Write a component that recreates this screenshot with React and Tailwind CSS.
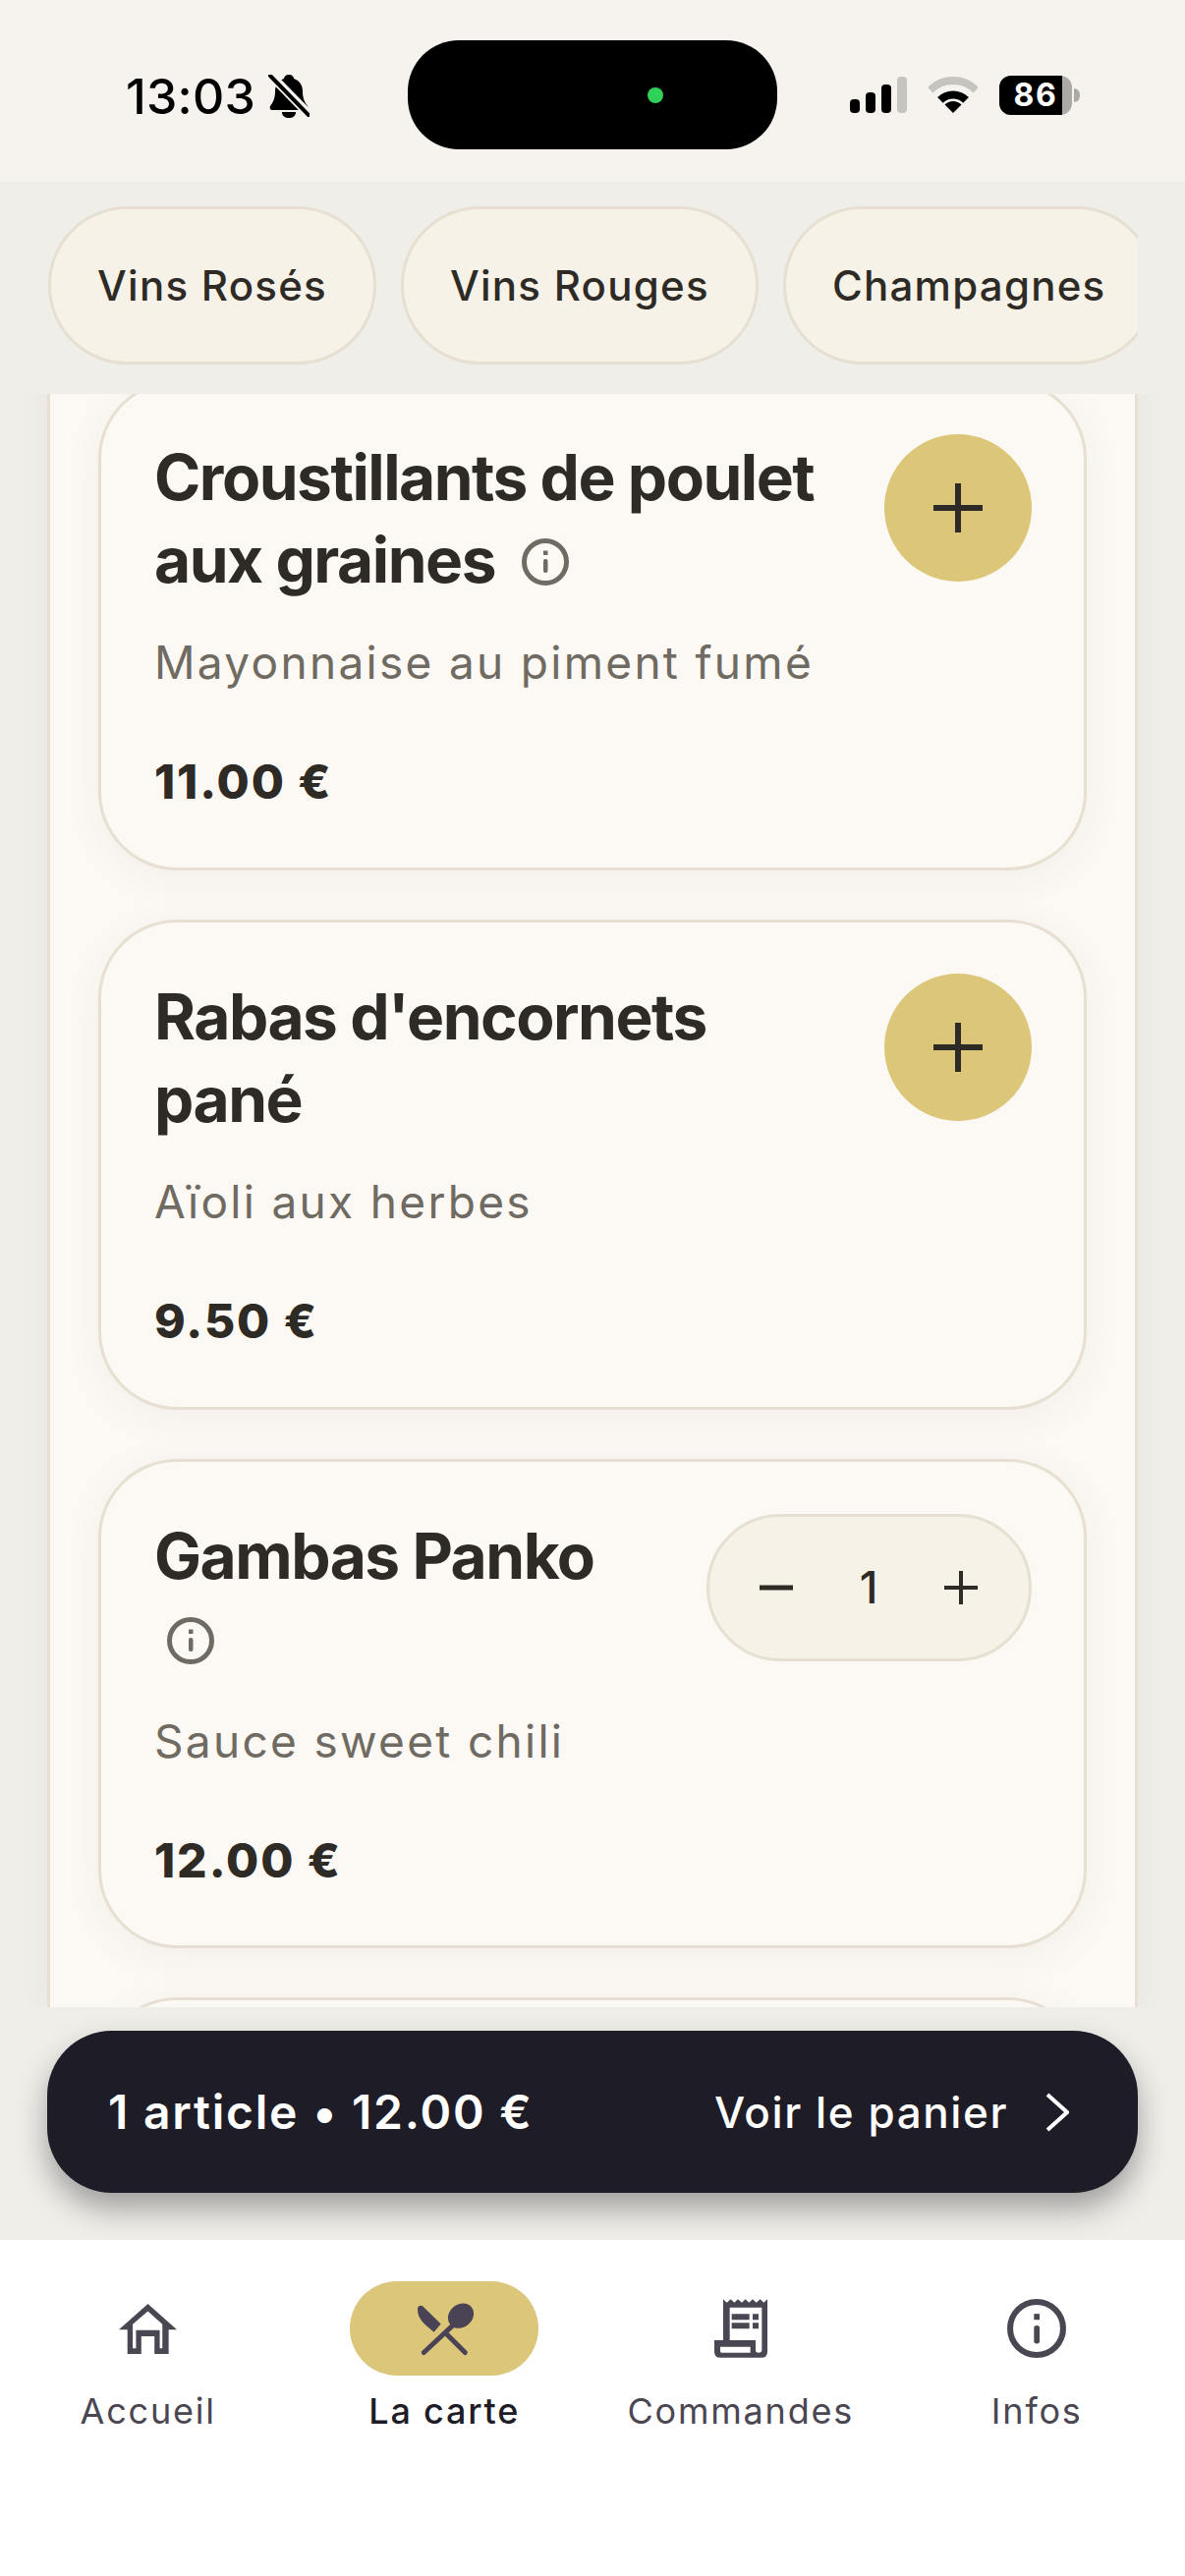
const INTER = { fontFamily: '"Inter", "Liberation Sans", sans-serif' };

function BellOff() {
  return (
    <svg width="42" height="44" viewBox="0 0 42 44" className="ml-[13px] shrink-0">
      <path d="M21 0c3 0 5 2 5 4 6 2 9 7 9 13 0 7 2 11 5 15 1 2 0 4-2 4H4c-2 0-3-2-2-4 3-4 5-8 5-15 0-6 3-11 9-13 0-2 2-4 5-4z" fill="#000" />
      <path d="M14 38h14c0 4-3 6-7 6s-7-2-7-6z" fill="#000" />
      <path d="M1 -1L42 41" stroke="#f6f3ee" strokeWidth="9" />
      <path d="M2 1L41 41" stroke="#000" strokeWidth="4" strokeLinecap="round" />
    </svg>
  );
}

function Signal() {
  return (
    <svg width="58" height="37" viewBox="0 0 58 37" className="shrink-0">
      <rect x="0" y="23" width="10" height="14" rx="4" fill="#000" />
      <rect x="16" y="16" width="10" height="21" rx="4" fill="#000" />
      <rect x="32" y="8" width="10" height="29" rx="4" fill="#000" />
      <rect x="48" y="0" width="10" height="37" rx="4" fill="#c6c4bf" />
    </svg>
  );
}

function Wifi() {
  return (
    <svg width="50" height="37" viewBox="0 0 50 37" className="shrink-0">
      <path d="M1.7 13.7A33 33 0 0 1 48.3 13.7" fill="none" stroke="#c6c4bf" strokeWidth="8" />
      <path d="M11.9 23.9A18.5 18.5 0 0 1 38.1 23.9" fill="none" stroke="#000" strokeWidth="8" />
      <path d="M25 37L16.5 28.5A12 12 0 0 1 33.5 28.5Z" fill="#000" />
    </svg>
  );
}

function Battery() {
  return (
    <div className="flex items-center shrink-0">
      <div className="relative w-[74px] h-[40px] rounded-[12px] overflow-hidden bg-[#acaaa5] flex">
        <div className="w-[64px] h-full bg-black flex items-center justify-center">
          <span className="text-white text-[32px] leading-none font-bold tracking-[0.05em] pl-[10px]" style={INTER}>86</span>
        </div>
      </div>
      <div className="ml-[2px] w-[6px] h-[14px] rounded-r-full bg-[#acaaa5]" />
    </div>
  );
}

function InfoIcon({ className }) {
  return (
    <svg viewBox="0 0 48 48" className={className} fill="none" stroke="#6f6a62">
      <circle cx="24" cy="24" r="21.5" strokeWidth="5" />
      <rect x="22" y="12.5" width="4.5" height="4.5" fill="#6f6a62" stroke="none" />
      <rect x="22" y="21" width="4.5" height="14" rx="2" fill="#6f6a62" stroke="none" />
    </svg>
  );
}

function PlusButton() {
  return (
    <button className="w-[150px] h-[150px] rounded-full bg-[#dcc679] flex items-center justify-center shrink-0">
      <svg width="50" height="50" viewBox="0 0 50 50">
        <path d="M25 0V50M0 25H50" stroke="#2e2a25" strokeWidth="6" />
      </svg>
    </button>
  );
}

function Stepper() {
  return (
    <div className="w-[331px] h-[150px] mt-[1px] rounded-[75px] bg-[#f6f2e8] border-[3px] border-[#e6dfd2] flex items-center justify-between pl-[51px] pr-[52px] shrink-0">
      <svg width="34" height="6" viewBox="0 0 34 6"><rect width="34" height="5" y="0.5" fill="#2e2a25" /></svg>
      <span className="text-[45px] font-medium text-[#2e2a25] leading-none" style={INTER}>1</span>
      <svg width="34" height="34" viewBox="0 0 34 34"><path d="M17 0V34M0 17H34" stroke="#2e2a25" strokeWidth="4" /></svg>
    </div>
  );
}

function Card({ title, desc, price, info, action }) {
  return (
    <div className="h-[498.67px] shrink-0 rounded-[80px] bg-[#fcf9f4] border-[3px] border-[#e6dfd2] shadow-[0_8px_40px_rgba(60,50,30,0.05)] pl-[54px] pr-[53px] pt-[52px]">
      <div className="flex items-start gap-[48px]">
        <h3 className="flex-1 min-w-0 pt-[2px] text-[64px] leading-[84px] font-bold tracking-[-0.023em] text-[#2e2a25]" style={INTER}>
          {title}
          {info ? " " : null}
          {info ? <InfoIcon className="inline-block ml-[13px] w-[48px] h-[48px] align-[-3px]" /> : null}
        </h3>
        {action}
      </div>
      <p className="mt-[30px] text-[46px] leading-[64px] tracking-[0.05em] text-[#6f6a62]" style={INTER}>{desc}</p>
      <p className="mt-[54px] text-[48px] leading-[72px] font-extrabold tracking-[0.04em] text-[#2e2a25]" style={INTER}>{price}</p>
    </div>
  );
}

function Pill({ children }) {
  return (
    <div className="h-[161px] px-[47px] shrink-0 rounded-[80px] bg-[#f6f2e8] border-[3px] border-[#e6dfd2] flex items-center text-[42px] font-medium tracking-[0.03em] text-[#2e2a25]" style={INTER}>
      {children}
    </div>
  );
}

function NavItem({ label, active, children }) {
  return (
    <div className="flex flex-col items-center">
      <div className={`h-[96px] w-[192px] flex items-center justify-center ${active ? "rounded-[48px] bg-[#dcc679]" : ""}`}>
        {children}
      </div>
      <span className={`mt-[12px] text-[36px] leading-[48px] tracking-[0.05em] ${active ? "text-[#1e1c26] font-medium" : "text-[#4a4652]"}`} style={INTER}>{label}</span>
    </div>
  );
}

export default function App() {
  return (
    <div className="w-[1206px] h-[2622px] flex flex-col overflow-hidden bg-[#f0eee8]" style={INTER}>
      {/* status bar */}
      <div className="h-[185px] shrink-0 bg-[#f6f3ee] flex items-start pt-[41px]">
        <div className="w-[415px] h-[111px] flex items-center pl-[128px] pt-[2px]">
          <span className="text-[50px] leading-none font-medium tracking-[0.005em] text-black">13:03</span>
          <BellOff />
        </div>
        <div className="w-[376px] h-[111px] rounded-[52px] bg-black relative">
          <div className="absolute left-[244px] top-[48px] w-[16px] h-[16px] rounded-full bg-[#30d158]" />
        </div>
        <div className="h-[111px] flex items-center pl-[74px] gap-[22px]">
          <Signal />
          <Wifi />
          <Battery />
        </div>
      </div>

      {/* category tabs */}
      <div className="h-[216px] shrink-0 bg-[#f0eee8] pt-[25px] pl-[49px] pr-[48px] z-10">
        <div className="flex gap-[25px] overflow-hidden">
          <Pill>Vins Rosés</Pill>
          <Pill>Vins Rouges</Pill>
          <Pill>Champagnes</Pill>
        </div>
      </div>

      {/* list */}
      <div className="flex-1 min-h-0 overflow-hidden px-[48px]">
        <div className="h-full bg-[#fcf9f4] border-x-[3px] border-[#e6dfd2] shadow-[0_0_30px_rgba(60,50,30,0.05)] px-[49px] flex flex-col gap-[50px] -mt-[13.67px] pb-[14px] box-content">
          <Card
            title="Croustillants de poulet aux graines"
            info
            desc="Mayonnaise au piment fumé"
            price="11.00 €"
            action={<PlusButton />}
          />
          <Card
            title="Rabas d'encornets pané"
            desc="Aïoli aux herbes"
            price="9.50 €"
            action={<PlusButton />}
          />
          <Card
            title="Gambas Panko"
            info
            desc="Sauce sweet chili"
            price="12.00 €"
            action={<Stepper />}
          />
          <Card title="" desc="" price="" />
        </div>
      </div>

      {/* cart */}
      <div className="h-[237px] shrink-0 bg-[#f0eee8] px-[48px] pt-[24px] z-10">
        <div className="h-[165px] rounded-[66px] bg-[#1e1c26] shadow-[0_16px_30px_rgba(30,28,38,0.38)] flex items-center justify-between pl-[62px] pr-[70px]">
          <span className="text-[48px] font-semibold tracking-[0.037em] text-white">1 article • 12.00 €</span>
          <div className="flex items-center gap-[38px]">
            <span className="text-[44px] font-medium tracking-[0.036em] text-white">Voir le panier</span>
            <svg width="24" height="40" viewBox="0 0 24 40" fill="none">
              <path d="M2 2L22 20L2 38" stroke="#fff" strokeWidth="4" />
            </svg>
          </div>
        </div>
      </div>

      {/* nav */}
      <div className="h-[342px] shrink-0 bg-white pt-[42px] grid grid-cols-4 content-start">
        <NavItem label="Accueil">
          <svg width="59" height="51" viewBox="64 130 176 152">
            <path
              fillRule="evenodd"
              fill="#4a4652"
              d="M152 130L240 208H215V282H172V228H132V282H90V208H64ZM152 152L106 192V265H116V210H188V265H196V192Z"
            />
          </svg>
        </NavItem>
        <NavItem label="La carte" active>
          <svg width="60" height="57" viewBox="966 125 180 170">
            <path d="M975 150C975 138 985 136 992 142L1046 195L1025 220C995 195 975 180 975 150Z" fill="#4a4356" />
            <path d="M1062 224L1120 282" stroke="#4a4356" strokeWidth="15" strokeLinecap="round" />
            <ellipse cx="1107" cy="170" rx="42" ry="35" transform="rotate(-40 1107 170)" fill="#4a4356" />
            <path d="M1082 200L994 282" stroke="#4a4356" strokeWidth="15" strokeLinecap="round" />
          </svg>
        </NavItem>
        <NavItem label="Commandes">
          <svg width="54" height="60" viewBox="140 120 162 178">
            <path
              fillRule="evenodd"
              fill="#4a4652"
              d="M167 120L178 130L190 120L201 130L212 120L224 130L235 120L246 130L257 120L268 130L280 120L291 130L302 120V280Q302 298 284 298H158Q140 298 140 280V245H167ZM187 145V245H266V275Q266 283 275 283Q285 283 285 275V145ZM158 265V278Q158 283 162 283H250V265Z"
            />
            <path d="M193 165H247V183H193ZM193 192H247V210H193ZM257 165H275V183H257ZM257 192H275V210H257Z" fill="#4a4652" />
          </svg>
        </NavItem>
        <NavItem label="Infos">
          <svg width="60" height="60" viewBox="1036 120 178 178" fill="none">
            <circle cx="1125" cy="209" r="80" stroke="#4a4652" strokeWidth="18" />
            <rect x="1117" y="165" width="17" height="18" fill="#4a4652" />
            <rect x="1117" y="200" width="17" height="55" rx="8" fill="#4a4652" />
          </svg>
        </NavItem>
      </div>
    </div>
  );
}
